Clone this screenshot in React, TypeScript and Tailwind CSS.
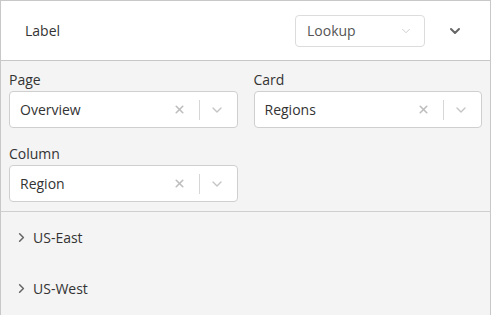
import { ChevronDown, ChevronRight, X } from "lucide-react";

interface SelectProps {
  value: string;
}

function ClearableSelect({ value }: SelectProps) {
  return (
    <div className="flex h-[37px] items-center rounded-[4px] border border-[#cfcfcf] bg-white pl-[10px]">
      <span className="flex-1 text-[14px] text-[#333]">{value}</span>
      <X className="mr-[13px] h-[13px] w-[13px] text-[#bdbdbd]" strokeWidth={3} />
      <span className="h-[20px] w-px bg-[#d6d6d6]" />
      <ChevronDown className="ml-[9px] mr-[12px] h-[16px] w-[16px] text-[#c4c4c4]" strokeWidth={2} />
    </div>
  );
}

function Field({ label, value }: { label: string; value: string }) {
  return (
    <div className="flex flex-col">
      <span className="mb-[1px] text-[14px] leading-[20px] text-[#333]">{label}</span>
      <ClearableSelect value={value} />
    </div>
  );
}

export default function App() {
  const regions = ["US-East", "US-West"];

  return (
    <div className="h-[315px] w-[492px] bg-white" style={{ fontFamily: '"Open Sans", sans-serif' }}>
      <div className="h-full w-[491px] border-x border-t border-[#c8c8c8] bg-[#f4f4f4]">
        {/* Header */}
        <div className="flex h-[60px] items-center border-b border-[#c8c8c8] bg-white pl-[24px] pr-[27px]">
          <span className="flex-1 text-[14px] text-[#333]">Label</span>
          <div className="flex h-[32px] w-[130px] items-center rounded-[4px] border border-[#dcdcdc] bg-white pl-[11px] pr-[11px]">
            <span className="flex-1 text-[14px] text-[#555]">Lookup</span>
            <ChevronDown className="h-[14px] w-[14px] text-[#c8c8c8]" strokeWidth={1.5} />
          </div>
          <ChevronDown className="ml-[22px] h-[16px] w-[16px] text-[#666]" strokeWidth={3} />
        </div>

        {/* Fields */}
        <div className="grid grid-cols-2 gap-x-4 gap-y-[16px] px-2 pt-[9px] pb-[9px]">
          <Field label="Page" value="Overview" />
          <Field label="Card" value="Regions" />
          <Field label="Column" value="Region" />
        </div>

        {/* Region rows */}
        <div className="border-t border-[#cfcfcf]">
          {regions.map((r) => (
            <div key={r} className="flex h-[51px] items-center pl-[13px]">
              <ChevronRight className="mr-[4px] h-[15px] w-[15px] text-[#666]" strokeWidth={2.5} />
              <span className="text-[14px] text-[#333]">{r}</span>
            </div>
          ))}
        </div>
      </div>
    </div>
  );
}
